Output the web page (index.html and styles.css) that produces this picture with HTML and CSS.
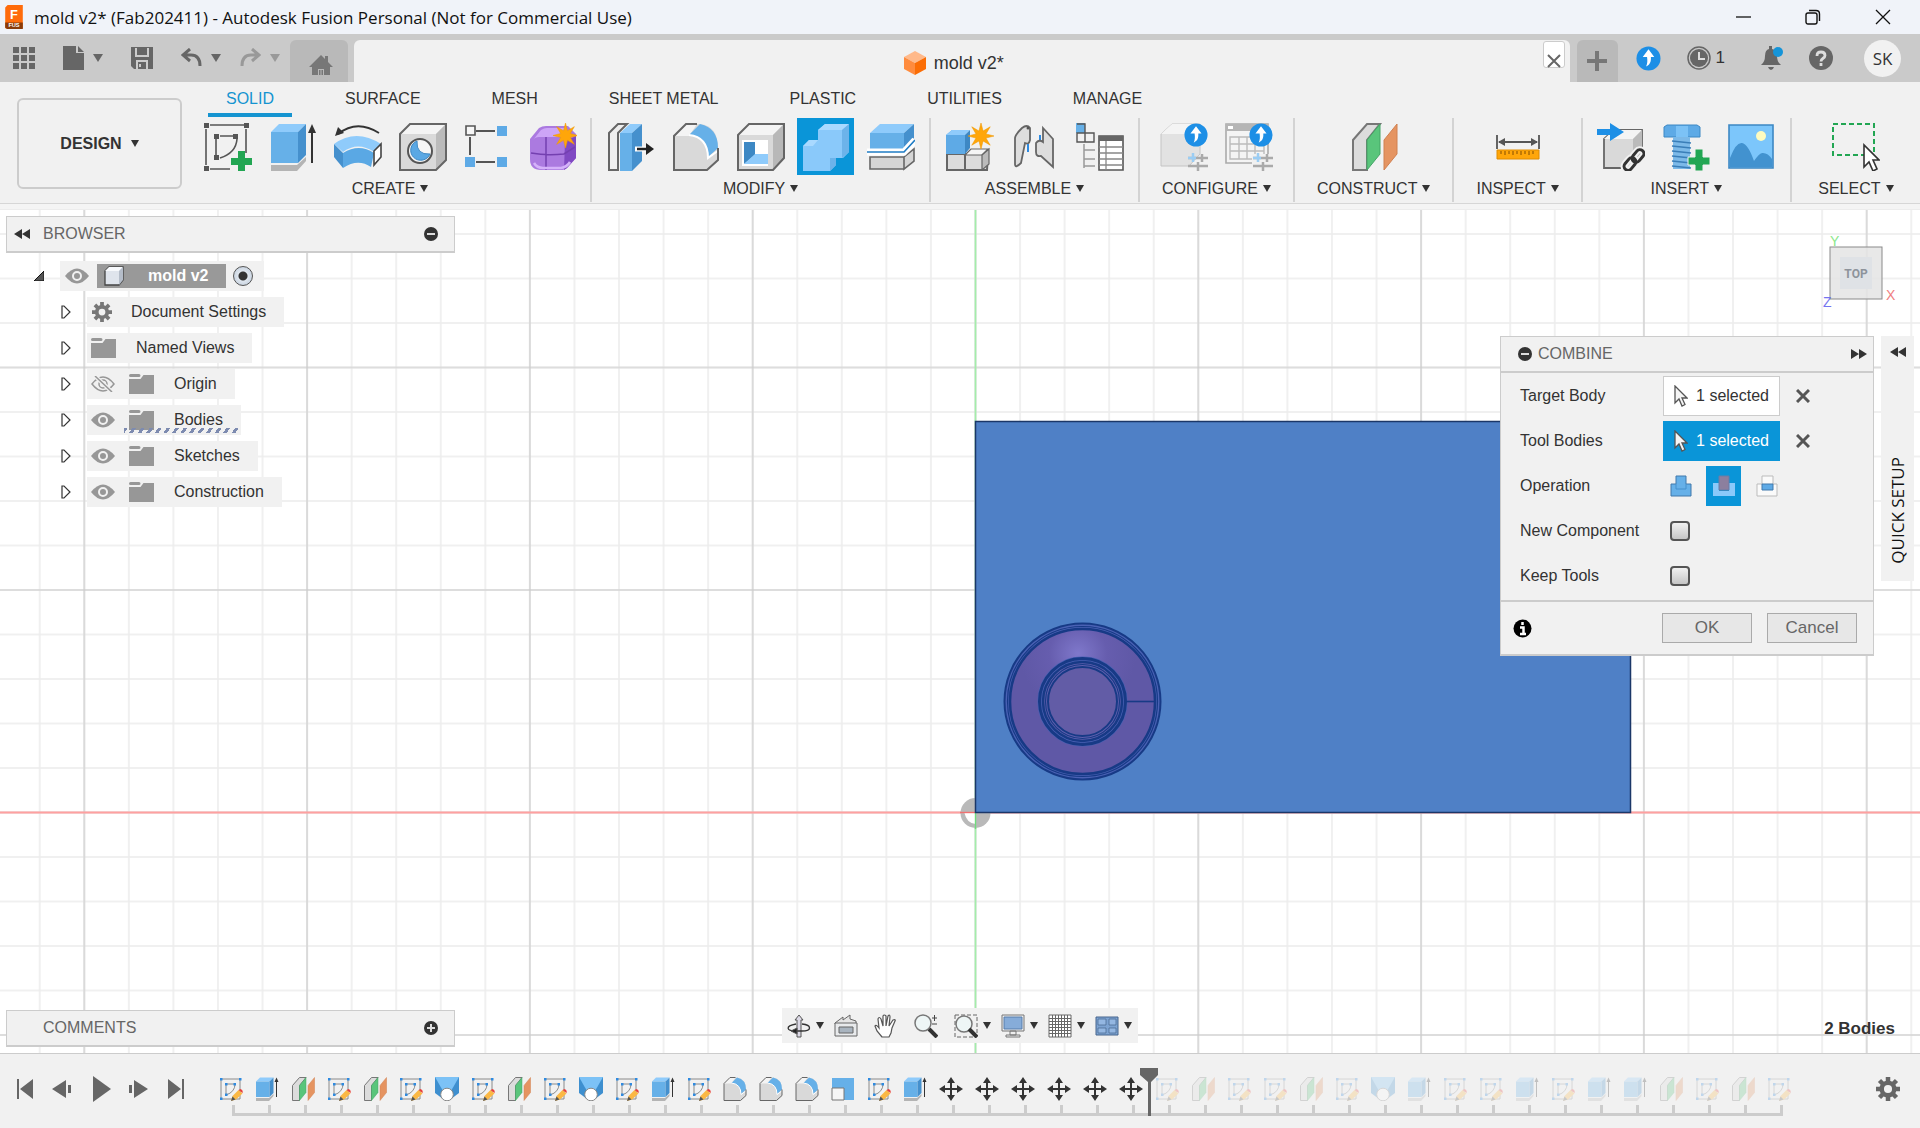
FILE: index.html
```html
<!DOCTYPE html>
<html lang="en">
<head>
    <meta charset="UTF-8">
    <meta name="viewport" content="width=device-width, initial-scale=1.0">
    <title>mold v2* (Fab202411) - Autodesk Fusion Personal (Not for Commercial Use)</title>
    <link rel="stylesheet" href="styles.css">
</head>
<body>
    <!-- Shared icons -->
    <svg class="sprite" aria-hidden="true">
        <symbol id="upload" viewBox="0 0 26 26">
            <circle cx="13" cy="13" r="12.5" fill="#1d8fe6"/>
            <path d="M13 3.500l6 8h-3.500c.3 5-1 8-5 9.800 1.500-3 1.500-6 1-9.800H7z" fill="#fff"/>
        </symbol>
        <symbol id="star" viewBox="0 0 24 24">
            <path d="M12 0l1.900 7.400 6.600-3.900-3.900 6.600L24 12l-7.400 1.900 3.900 6.600-6.600-3.900L12 24l-1.900-7.400-6.600 3.900 3.900-6.600L0 12l7.400-1.900-3.900-6.600 6.600 3.900z" fill="#ffa60a" stroke="#f09800" stroke-width=".5"/>
        </symbol>
        <symbol id="eye" viewBox="0 0 24 16">
            <path d="M0 8Q12-7 24 8 12 23 0 8z" fill="#979797"/>
            <circle cx="12" cy="8" r="4" fill="none" stroke="#f1f1f1" stroke-width="2"/>
        </symbol>
        <symbol id="eye-off" viewBox="0 0 24 16">
            <path d="M1 8Q12-6 23 8 12 22 1 8z" fill="none" stroke="#979797" stroke-width="1.500"/>
            <circle cx="12" cy="8" r="4" fill="none" stroke="#979797" stroke-width="1.500"/>
            <path d="M4 0l17 16" stroke="#f1f1f1" stroke-width="4"/>
            <path d="M4 0l17 16" stroke="#979797" stroke-width="1.500"/>
        </symbol>
        <symbol id="folder" viewBox="0 0 25 20">
            <path d="M0 1.500Q0 0 1.500 0H10q1.500 0 1.500 1.500T10 3H1.500Q0 3 0 1.500zM0 5h11.500l3-4H25v19H0z" fill="#979797"/>
        </symbol>
        <symbol id="gear" viewBox="0 0 24 24">
            <circle cx="12" cy="12" r="6.300" fill="none" stroke="currentColor" stroke-width="4.500"/>
            <path d="M12 0v5M12 19v5M0 12h5M19 12h5M3.500 3.500L7 7M17 17l3.500 3.500M20.500 3.500L17 7M7 17l-3.500 3.500" stroke="currentColor" stroke-width="4.500"/>
        </symbol>
        <symbol id="closed" viewBox="0 0 10 14">
            <path d="M1 1h2l6 6-6 6H1z" fill="#fff" stroke="#333" stroke-width="1.200"/>
        </symbol>
        <symbol id="collapse" viewBox="0 0 16 10">
            <path d="M8 0v10L0 5zM16 0v10L8 5z" fill="#333"/>
        </symbol>
        <symbol id="expand" viewBox="0 0 16 10">
            <path d="M0 0v10l8-5zM8 0v10l8-5z" fill="#333"/>
        </symbol>
        <symbol id="minus" viewBox="0 0 14 14">
            <circle cx="7" cy="7" r="7" fill="#333"/><path d="M3 7h8" stroke="#ddd" stroke-width="2"/>
        </symbol>
        <symbol id="plus" viewBox="0 0 14 14">
            <circle cx="7" cy="7" r="7" fill="#333"/><path d="M3 7h8M7 3v8" stroke="#ddd" stroke-width="2"/>
        </symbol>
        <symbol id="pointer" viewBox="0 0 14 22">
            <path d="M1 1v17l4-4 3 7 3-1.500-3-6.500h5z" fill="#f5f5f5" stroke="#555" stroke-width="1.300"/>
        </symbol>
        <symbol id="cross" viewBox="0 0 14 14">
            <path d="M1 1l12 12M13 1L1 13" stroke="#555" stroke-width="3"/>
        </symbol>

        <symbol id="sketch" viewBox="0 0 24 24">
            <path d="M2 2h19v20H2z" fill="none" stroke="#8a8a8a"/>
            <path d="M7 7h9q0 8-9 11z" fill="none" stroke="#8a8a8a"/>
            <path d="M1 1h2.500v2.500H1zM20 1h2.500v2.500H20zM1 20.500h2.500V23H1zM6 6h2.500v2.500H6zM14.500 6H17v2.500h-2.500zM6 16.500h2.500V19H6z" fill="#2e8ae0"/>
            <path d="M12 24l1.500-5 6-6 4 3.500-6.500 6z" fill="#fbb845"/><path d="M12 24l1.500-4.500 3 3z" fill="#555"/>
            <path d="M19.500 13l2-1q3 1 2 4z" fill="#e8413c"/>
        </symbol>
        <symbol id="extrude" viewBox="0 0 48 48">
            <path d="M2 42h26l9-8v4l-9 10H2z" fill="#b4b4b4"/>
            <path d="M2 9l8-8h27l-8 8z" fill="#8fcbfb"/><path d="M2 9h27v31H2z" fill="#66b0e8"/><path d="M29 9l8-8v31l-8 8z" fill="#4590cd"/>
            <path d="M43 40V7" stroke="#333" stroke-width="2"/><path d="M43 1l4 9h-8z" fill="#333"/>
        </symbol>
        <symbol id="plane" viewBox="0 0 48 48">
            <path d="M3 17L17 1h13L17 17v30H3z" fill="#dcdcdc" stroke="#777" stroke-width="2"/>
            <path d="M17 17L30 1v30L17 47z" fill="#59c57b" stroke="#44a566" stroke-width="1"/>
            <path d="M34 17L47 1v30L34 47z" fill="#e59461" stroke="#d08050" stroke-width="1"/>
        </symbol>
        <symbol id="loft" viewBox="0 0 24 24">
            <path d="M0 0h24v16l-8 6H8l-8-6z" fill="#3e8fcf"/><path d="M0 0h24l-8 14H8z" fill="#7cc2f6"/>
            <circle cx="12" cy="17.500" r="6.300" fill="#fff" stroke="#888"/>
        </symbol>
        <symbol id="fillet" viewBox="0 0 48 48">
            <path d="M2 13L14 1h14q18 2 18 24v12L35 47H2z" fill="#d9d9d9"/>
            <path d="M2 13L14 1h11L17 13z" fill="#f4f4f4"/>
            <path d="M17 12L28 1q18 4 18 24L36 34q0-20-19-22z" fill="#66b0e8"/>
            <path d="M17 12q19 2 19 23l11-8" fill="none" stroke="#fff" stroke-width="2"/>
            <path d="M25 1H14L2 13v34h33l11-10V25" fill="none" stroke="#666" stroke-width="2"/>
        </symbol>
        <symbol id="scale" viewBox="0 0 24 24">
            <path d="M1 1h22v22H1z" fill="#66b0e8"/><path d="M1 11h12v12H1z" fill="#f6f6f6" stroke="#777"/>
        </symbol>
        <symbol id="move" viewBox="0 0 24 24">
            <path d="M12 3v18M3 12h18" stroke="#333" stroke-width="2"/>
            <path d="M12 0l4 6H8zM12 24l4-6H8zM0 12l6-4v8zM24 12l-6-4v8z" fill="#333"/>
        </symbol>
    </svg>

    <div class="app">
        <header class="titlebar">
            <svg class="logo" viewBox="0 0 22 30"><path d="M3 0h19v29H0V3z" fill="#ff6b0b"/><path d="M0 22h22v8H2l-2-2z" fill="#8a3b0a"/><text x="11" y="17" class="logo-f">F</text><text x="11" y="28" class="logo-fus">FUS</text></svg>
            <h1>mold v2* (Fab202411) - Autodesk Fusion Personal (Not for Commercial Use)</h1>
            <div class="window-buttons">
                <button aria-label="Minimize"><svg width="16" height="16"><path d="M1 8h15" stroke="#111" stroke-width="1.300"/></svg></button>
                <button aria-label="Restore"><svg width="16" height="16" fill="none" stroke="#111" stroke-width="1.400"><rect x="1" y="4" width="11" height="11" rx="2"/><path d="M4 1.500h7q3.500 0 3.500 3.500v7"/></svg></button>
                <button aria-label="Close"><svg width="16" height="16"><path d="M1 1l14 14M15 1L1 15" stroke="#111" stroke-width="1.300"/></svg></button>
            </div>
        </header>

        <nav class="appbar">
            <div class="quick">
                <button aria-label="Show data panel"><svg width="22" height="22" fill="#666"><path d="M0 0h6v6H0zM8 0h6v6H8zM16 0h6v6h-6zM0 8h6v6H0zM8 8h6v6H8zM16 8h6v6h-6zM0 16h6v6H0zM8 16h6v6H8zM16 16h6v6h-6z"/></svg></button>
                <button class="with-caret" aria-label="File"><svg width="21" height="24" fill="#666"><path d="M0 0h13v7h8v17H0zM15 0l6 6h-6z"/></svg><span class="caret"></span></button>
                <button aria-label="Save"><svg width="22" height="22"><path d="M0 0h22v22H3l-3-3z" fill="#666"/><path d="M5 1v8h12V1M6 22v-8h10v8M9 17v3" fill="none" stroke="#ccc" stroke-width="2"/></svg></button>
                <button class="with-caret" aria-label="Undo"><svg width="21" height="20" fill="none" stroke="#666" stroke-width="3"><path d="M9 1L2 7l7 6M3 7h7q9 0 9 11"/></svg><span class="caret"></span></button>
                <button class="with-caret dim" aria-label="Redo"><svg width="21" height="20" fill="none" stroke="#999" stroke-width="3"><path d="M12 1l7 6-7 6M18 7h-7Q2 7 2 18"/></svg><span class="caret"></span></button>
            </div>
            <button class="home" aria-label="Home"><svg width="24" height="20" fill="#777"><path d="M12 0l4 4V1h3v6l5 5h-3v8h-6v-6H9v6H3v-8H0z"/><path d="M10 15h1.500v5H10zM12.500 15H14v5h-1.500z"/></svg></button>
            <div class="doc-tab">
                <svg width="22" height="24" viewBox="0 0 22 24"><path d="M11 0l11 6-11 6L0 6z" fill="#ffb98a"/><path d="M0 6l11 6v12L0 18z" fill="#ff8b3d"/><path d="M22 6l-11 6v12l11-6z" fill="#fb6d05"/></svg>
                <span>mold v2*</span>
                <button class="close-tab" aria-label="Close tab"><svg width="14" height="14"><path d="M1 1l12 12M13 1L1 13" stroke="#666" stroke-width="2"/></svg></button>
            </div>
            <button class="new-tab" aria-label="New tab"><svg width="20" height="20"><path d="M10 0v20M0 10h20" stroke="#777" stroke-width="4"/></svg></button>
            <div class="account">
                <button aria-label="Updates"><svg width="25" height="25"><use href="#upload"/></svg></button>
                <button class="jobs" aria-label="Job status"><svg width="24" height="24"><circle cx="12" cy="12" r="11" fill="none" stroke="#666" stroke-width="1.500"/><circle cx="12" cy="12" r="9" fill="#666"/><path d="M12 6v7h6" fill="none" stroke="#ddd" stroke-width="2"/></svg>1</button>
                <button aria-label="Notifications"><svg width="22" height="24"><path d="M0 19q4-3 4-9 0-6 4-7V0h3v3q5 1 5 7 0 6 4 9zM7 21h6q-1 3-3 3t-3-3z" fill="#666"/><circle cx="17" cy="6" r="5" fill="#1594d8"/></svg></button>
                <button aria-label="Help"><svg width="24" height="24"><circle cx="12" cy="12" r="12" fill="#666"/><path d="M8 10q0-4 4-4t4 3.500c0 3-4 2.500-4 6M12 17v3" fill="none" stroke="#ddd" stroke-width="2.800"/></svg></button>
                <button class="avatar">SK</button>
            </div>
        </nav>

        <section class="ribbon">
            <button class="workspace">DESIGN <span class="caret"></span></button>
            <div class="ribbon-main">
                <div class="tabs">
                    <button class="active">SOLID</button>
                    <button>SURFACE</button>
                    <button>MESH</button>
                    <button>SHEET METAL</button>
                    <button>PLASTIC</button>
                    <button>UTILITIES</button>
                    <button>MANAGE</button>
                </div>
                <div class="groups">
                    <div class="group">
                        <div class="tools">
                            <button aria-label="Create sketch"><svg viewBox="0 0 48 48"><path d="M6 2h34M2 6v36M42 6v24M6 46h20" stroke="#555" stroke-width="1.600"/><path d="M12 15v18M16 13h14M33 16q-1 14-17 19" fill="none" stroke="#555" stroke-width="1.600"/><path d="M0 0h5v5H0zM40 0h5v5h-5zM0 43h5v5H0zM10 11h5v5h-5zM29 11h5v5h-5zM10 32h5v5h-5z" fill="#555"/><path d="M34 28h7v7h7v7h-7v6h-7v-6h-7v-7h7z" fill="#22a653"/></svg></button>
                            <button aria-label="Extrude"><svg><use href="#extrude"/></svg></button>
                            <button aria-label="Revolve"><svg viewBox="0 0 48 48"><path d="M0 21q22-16 47 0l-7 8q-16-11-31 0z" fill="#8fcbfb"/><path d="M0 21l9 9v15L0 34z" fill="#4590cd"/><path d="M9 30q16-10 31 0l-3 14q-13-9-28 1z" fill="#5aa8e4"/><path d="M40 28l7-7v13l-7 8z" fill="#fff" stroke="#444" stroke-width="1.600"/><path d="M4 11q19-15 41-1" fill="none" stroke="#333" stroke-width="1.800"/><path d="M1 13l3-9 6 6z" fill="#333"/></svg></button>
                            <button aria-label="Hole"><svg viewBox="0 0 48 48"><path d="M1 11L11 1h36v36L37 47H1z" fill="#d9d9d9"/><path d="M1 11L11 1h36L37 11z" fill="#f4f4f4"/><path d="M37 11L47 1v36L37 47z" fill="#bbb"/><path d="M1 11L11 1h36v36L37 47H1z" fill="none" stroke="#666" stroke-width="2"/><circle cx="21" cy="28" r="12" fill="#f6f6f6" stroke="#555" stroke-width="2"/><path d="M18 18a10 10 0 1 0 13 13q-14 1-13-13z" fill="#5aa8e4" stroke="#3d88c4"/></svg></button>
                            <button aria-label="Pattern"><svg viewBox="0 0 48 48"><path d="M12 8h19M6 14v18M12 39h19" stroke="#555" stroke-width="2"/><path d="M2 3h9v9H2z" fill="#f6f6f6" stroke="#555" stroke-width="1.600"/><path d="M33 3h10v10H33zM1 34h10v10H1zM33 34h10v10H33z" fill="#5eaae6"/></svg></button>
                            <button aria-label="Create form"><svg viewBox="0 0 48 48"><path d="M1 16L10 5q3-2 7-2h22l8 8v24l-9 10q-2 2-5 2H12Q1 47 1 36z" fill="#ab7ae0"/><path d="M4 17l8-10q3-2 6-2h19l-8 9H10q-4 0-6 3z" fill="#cda5f7"/><path d="M36 18l11-5v22l-9 10-3 2z" fill="#8049c2"/><path d="M2 30q16 3 33 1l11-7M17 14v33" fill="none" stroke="#7440b0" stroke-width="1.500"/><path d="M5 40q3 5 9 5h18q6-1 9-6" fill="none" stroke="#d5b2fa" stroke-width="2.500"/><use href="#star" x="24" y="0" width="25" height="25"/></svg></button>
                        </div>
                        <button class="group-label">CREATE <span class="caret"></span></button>
                    </div>
                    <div class="group">
                        <div class="tools">
                            <button aria-label="Press pull"><svg viewBox="0 0 48 48"><path d="M2 10L11 1h9l-9 9v37H2z" fill="#eee" stroke="#666" stroke-width="2"/><path d="M13 10L23 1h12L25 10z" fill="#8fcbfb"/><path d="M13 10h12v38H13z" fill="#66b0e8"/><path d="M25 10l10-9v37l-10 10z" fill="#4590cd"/><path d="M28 26h12" stroke="#fff" stroke-width="5"/><path d="M30 26h10" stroke="#222" stroke-width="2.500"/><path d="M39 20l8 6-8 6z" fill="#222"/></svg></button>
                            <button aria-label="Fillet"><svg><use href="#fillet"/></svg></button>
                            <button aria-label="Shell"><svg viewBox="0 0 48 48"><path d="M1 12L12 1h35v34L36 47H1z" fill="#d9d9d9"/><path d="M1 12L12 1h35L36 12z" fill="#f4f4f4"/><path d="M36 12L47 1v34L36 47z" fill="#b8b8b8"/><path d="M1 12L12 1h35v34L36 47H1z" fill="none" stroke="#666" stroke-width="2"/><path d="M5 17h26v26H5z" fill="#fff"/><path d="M7 19h11v13L7 41z" fill="#3d88c4"/><path d="M18 31h13v10H7z" fill="#8fcbfb"/></svg></button>
                            <button class="on" aria-label="Combine"><svg viewBox="0 0 48 48"><path d="M1 23l6-6h9V7l7-6h24v28l-6 6h-7v7l-6 6H1z" fill="#8ac9fa"/><path d="M1 23l6-6h9l-5 6zM16 7l7-6h24l-7 6z" fill="#a9d9ff"/><path d="M40 7l7-6v28l-7 6zM28 35h6v7l-6 6z" fill="#6cb3ea"/></svg></button>
                            <button aria-label="Split body"><svg viewBox="0 0 48 48"><path d="M3 10l10-9h34L37 10z" fill="#8fcbfb"/><path d="M3 10h34v16H3z" fill="#66b0e8"/><path d="M37 10L47 1v14L37 26z" fill="#4590cd"/><path d="M3 34h34v12H3zM37 34l10-8v12l-10 8z" fill="#d5d5d5" stroke="#666" stroke-width="1.600"/><path d="M0 29h37L48 17" fill="none" stroke="#fff" stroke-width="7"/><path d="M0 29h37L48 17" fill="none" stroke="#1f7cc4" stroke-width="1.600"/></svg></button>
                        </div>
                        <button class="group-label">MODIFY <span class="caret"></span></button>
                    </div>
                    <div class="group">
                        <div class="tools">
                            <button aria-label="New component"><svg viewBox="0 0 48 48"><path d="M1 31h41l-1 16H1zM19 31v16" fill="#dcdcdc" stroke="#666" stroke-width="2"/><path d="M19 32l6-6h17l-6 6z" fill="#f6f6f6" stroke="#666" stroke-width="1.200"/><path d="M36 32l7-6v15l-7 6z" fill="#bbb" stroke="#666" stroke-width="1.200"/><path d="M0 12l6-5h17l-4 5v19H0z" fill="#5eaae6"/><path d="M0 12l6-5h18l-5 5z" fill="#8fcbfb"/><path d="M19 12l5-5v18l-5 6z" fill="#3d88c4"/><use href="#star" x="22" y="0" width="26" height="26"/></svg></button>
                            <button aria-label="Joint"><svg viewBox="0 0 48 48"><path d="M4 15q0-3 7-10 5-4 8 0v12q-1 5-5 3L10 40q-6 6-6 1z" fill="#ddd" stroke="#666" stroke-width="1.800"/><circle cx="17" cy="5" r="1.500" fill="#555"/><path d="M17 21v8M29 12v7" stroke="#2e8ae0" stroke-width="2"/><path d="M32 5l10 11v28L30 33q-5 1-5-4V20q3-4 7-1z" fill="#ddd" stroke="#666" stroke-width="1.800"/></svg></button>
                            <button aria-label="Parts list"><svg viewBox="0 0 48 48"><path d="M0 0h9v10H0z" fill="#66b0e8"/><path d="M1 10h8v9H1zM9 10h9v9H9zM1 1h8v9" fill="none" stroke="#555" stroke-width="1.400"/><path d="M8 21v24M8 27h11M8 36h11M8 43h11" stroke="#999" stroke-width="1.500"/><path d="M23 13h24v34H23z" fill="#fff" stroke="#555" stroke-width="1.600"/><path d="M23 13h24v5H23z" fill="#666"/><path d="M23 24h24M23 30h24M23 36h24M23 42h24M30 18v29" stroke="#888" stroke-width="1.300"/></svg></button>
                        </div>
                        <button class="group-label">ASSEMBLE <span class="caret"></span></button>
                    </div>
                    <div class="group">
                        <div class="tools">
                            <button aria-label="Configure design"><svg viewBox="0 0 48 48"><path d="M1 11L12 1h28v30l-11 12H1z" fill="#e2e2e2" stroke="#c4c4c4"/><path d="M1 11L12 1h28L29 11z" fill="#f4f4f4"/><path d="M28 35h20M28 43h20M42 31v8M38 39v9" stroke="#aaa" stroke-width="2.500"/><path d="M28 35h8M33 30v9" stroke="#9bcdf3" stroke-width="2.500"/><use href="#upload" x="24" y="0" width="24" height="24"/></svg></button>
                            <button aria-label="Configuration table"><svg viewBox="0 0 48 48"><path d="M1 1h42v39H1z" fill="#f4f4f4" stroke="#aaa" stroke-width="1.600"/><path d="M1 1h42v7H1z" fill="#b5b5b5"/><path d="M3 3h5v3H3z" fill="#fff"/><path d="M5 14h34v22H5zM5 21h34M5 28h34M14 14v22M22 14v22M30 14v22" fill="none" stroke="#bbb" stroke-width="1.400"/><path d="M27 31h21v17H27z" fill="#f1f1f1"/><path d="M28 35h20M28 43h20M42 31v8M38 39v9" stroke="#aaa" stroke-width="2.500"/><path d="M28 35h8M33 30v9" stroke="#9bcdf3" stroke-width="2.500"/><use href="#upload" x="24" y="0" width="24" height="24"/></svg></button>
                        </div>
                        <button class="group-label">CONFIGURE <span class="caret"></span></button>
                    </div>
                    <div class="group">
                        <div class="tools">
                            <button aria-label="Offset plane"><svg><use href="#plane"/></svg></button>
                        </div>
                        <button class="group-label">CONSTRUCT <span class="caret"></span></button>
                    </div>
                    <div class="group">
                        <div class="tools">
                            <button aria-label="Measure"><svg viewBox="0 0 48 48"><path d="M3 12v14M45 12v14M5 19h38" stroke="#555" stroke-width="1.800"/><path d="M4 19l7-4v8zM44 19l-7-4v8z" fill="#555"/><path d="M3 27h42v9H3z" fill="#ffa60a" stroke="#e08c00"/><path d="M7 28v3M11 28v4M15 28v3M19 28v4M23 28v3M27 28v4M31 28v3M35 28v4M39 28v3" stroke="#844f00"/></svg></button>
                        </div>
                        <button class="group-label">INSPECT <span class="caret"></span></button>
                    </div>
                    <div class="group">
                        <div class="tools">
                            <button aria-label="Insert derive"><svg viewBox="0 0 48 48"><path d="M7 16L17 7h28v28l-9 10H7z" fill="#d9d9d9" stroke="#666" stroke-width="1.800"/><path d="M7 16L17 7h28l-9 9z" fill="#f4f4f4"/><path d="M36 16l9-9v28l-9 10z" fill="#bbb"/><path d="M0 6h13V0l14 9-14 9v-6H0z" fill="#1d8fe6"/><g fill="none" stroke="#f1f1f1" stroke-width="7"><rect x="34" y="29" width="14" height="8" rx="4" transform="rotate(-50 41 33)"/><rect x="26" y="37" width="14" height="8" rx="4" transform="rotate(-50 33 41)"/></g><g fill="none" stroke="#333" stroke-width="3"><rect x="34" y="29" width="14" height="8" rx="4" transform="rotate(-50 41 33)"/><rect x="26" y="37" width="14" height="8" rx="4" transform="rotate(-50 33 41)"/></g></svg></button>
                            <button aria-label="Insert fastener"><svg viewBox="0 0 48 48"><path d="M2 4l3-2h30l3 2v10H2z" fill="#5eaae6" stroke="#3d88c4"/><path d="M14 3h12v11H14z" fill="#7cc2f6"/><path d="M11 14h17v32H11z" fill="#7cb9e8"/><path d="M10 18l19 2M10 23l19 2M10 28l19 2M10 33l19 2M10 38l19 2M10 43l19 2" stroke="#3a7eb8" stroke-width="1.500"/><path d="M33 26h8v8h7v8h-7v6h-8v-6h-7v-8h7z" fill="#22a653" stroke="#f1f1f1"/></svg></button>
                            <button aria-label="Insert decal"><svg viewBox="0 0 48 48"><path d="M2 2h44v43H2z" fill="#7cc6fb" stroke="#3d88c4" stroke-width="1.600"/><path d="M3 35Q9 19 15 20t12 18q6-9 9-8 5 0 9 6v8H3z" fill="#4292cf"/><circle cx="34" cy="13" r="5" fill="#fdfbc0"/></svg></button>
                        </div>
                        <button class="group-label">INSERT <span class="caret"></span></button>
                    </div>
                    <div class="group">
                        <div class="tools">
                            <button aria-label="Select"><svg viewBox="0 0 48 48"><path d="M1 1h41v31H1z" fill="none" stroke="#22a653" stroke-width="2" stroke-dasharray="5 3"/><path d="M32 22v22l5-5 4 9 4-2-4-9h6z" fill="#fff" stroke="#333" stroke-width="1.600"/></svg></button>
                        </div>
                        <button class="group-label">SELECT <span class="caret"></span></button>
                    </div>
                </div>
            </div>
        </section>

        <main class="canvas">
            <!-- Sketch grid, axes and the two bodies -->
            <svg class="scene" viewBox="0 0 1920 843" preserveAspectRatio="xMidYMid slice">
                <defs>
                    <pattern id="minor" x="974.500" y="601.500" width="44.560" height="44.500" patternUnits="userSpaceOnUse"><path d="M1 0v44.500M0 1h44.560" stroke="#ececec" stroke-width="1.500"/></pattern>
                    <pattern id="major" x="974.500" y="601.500" width="222.800" height="222.500" patternUnits="userSpaceOnUse"><path d="M1 0v222.500M0 1h222.800" stroke="#c9c9c9" stroke-width="1.100"/></pattern>
                    <radialGradient id="bowl" cx="47%" cy="17%" r="40%"><stop offset="0" stop-color="#7f78cb"/><stop offset=".5" stop-color="#665dae"/><stop offset="1" stop-color="#5f58a6"/></radialGradient>
                </defs>
                <rect width="1920" height="843" fill="#fff"/>
                <rect width="1920" height="843" fill="url(#minor)"/>
                <rect width="1920" height="843" fill="url(#major)"/>
                <path d="M0 602.500h1920" stroke="#ffa0a0" stroke-width="2"/>
                <path d="M975.500 0v843" stroke="#a3eeaa" stroke-width="1.600"/>
                <circle cx="975.500" cy="603" r="15" fill="#b9b9b9"/>
                <path d="M975.500 603v11q-9-1-11-11z" fill="#fff"/>
                <path d="M960 602.500h16" stroke="#f07070" stroke-width="1.400"/>
                <path d="M975.500 603v16" stroke="#6fdc7c" stroke-width="1.400"/>
                <rect x="975.500" y="211.500" width="655" height="391" fill="#4f80c6" stroke="#1b3768" stroke-width="1.500"/>
                <g fill="none" stroke="#173a86">
                    <circle cx="1082.500" cy="491.500" r="78" fill="#4a61b4" stroke-width="2"/>
                    <circle cx="1082.500" cy="491.500" r="75" stroke-width="1.200"/>
                    <circle cx="1082.500" cy="491.500" r="72.500" fill="url(#bowl)" stroke-width="2.500"/>
                    <circle cx="1082.500" cy="491.500" r="41" stroke="#4a61b4" stroke-width="8"/>
                    <circle cx="1082.500" cy="491.500" r="43" stroke-width="3"/>
                    <circle cx="1082.500" cy="491.500" r="39.500" fill="#5f5fae" stroke-width="2.500"/>
                    <circle cx="1082.500" cy="491.500" r="37" stroke-width="1.200"/>
                    <circle cx="1082.500" cy="491.500" r="34.500" fill="#625ca6" stroke-width="2"/>
                    <path d="M1127 491.500h28" stroke-width="1.600"/>
                </g>
            </svg>

            <aside class="browser">
                <div class="panel-title">
                    <svg width="16" height="10"><use href="#collapse"/></svg>
                    <h2>BROWSER</h2>
                    <button aria-label="Minimize browser"><svg width="14" height="14"><use href="#minus"/></svg></button>
                </div>
                <ul class="tree">
                    <li class="root">
                        <svg class="arrow" width="10" height="10"><path d="M10 0v10H0z" fill="#555" stroke="#111"/></svg>
                        <div class="node">
                            <svg width="24" height="16"><use href="#eye"/></svg>
                            <span class="root-name">
                                <svg width="20" height="20"><path d="M1 5l4-4h14v13l-4 5H1z" fill="#dfe4ec" stroke="#444" stroke-width="1.300"/><path d="M1 5l4-4h14l-4 4z" fill="#f7f9fc"/><path d="M15 5l4-4v13l-4 5z" fill="#b5bdc9"/></svg>
                                mold v2
                            </span>
                            <input type="radio" name="active" aria-label="Activate mold v2" checked>
                        </div>
                    </li>
                    <li><svg class="arrow" width="10" height="14"><use href="#closed"/></svg><div class="node"><svg class="tree-gear" width="20" height="20"><use href="#gear"/></svg>Document Settings</div></li>
                    <li><svg class="arrow" width="10" height="14"><use href="#closed"/></svg><div class="node views"><svg width="25" height="20"><use href="#folder"/></svg>Named Views</div></li>
                    <li><svg class="arrow" width="10" height="14"><use href="#closed"/></svg><div class="node"><svg width="24" height="16"><use href="#eye-off"/></svg><svg class="folder" width="25" height="20"><use href="#folder"/></svg>Origin</div></li>
                    <li><svg class="arrow" width="10" height="14"><use href="#closed"/></svg><div class="node marked"><svg width="24" height="16"><use href="#eye"/></svg><svg class="folder" width="25" height="20"><use href="#folder"/></svg>Bodies</div></li>
                    <li><svg class="arrow" width="10" height="14"><use href="#closed"/></svg><div class="node"><svg width="24" height="16"><use href="#eye"/></svg><svg class="folder" width="25" height="20"><use href="#folder"/></svg>Sketches</div></li>
                    <li><svg class="arrow" width="10" height="14"><use href="#closed"/></svg><div class="node"><svg width="24" height="16"><use href="#eye"/></svg><svg class="folder" width="25" height="20"><use href="#folder"/></svg>Construction</div></li>
                </ul>
            </aside>

            <svg class="viewcube" width="84" height="84" viewBox="0 0 84 84">
                <text x="14" y="15" fill="#8be88b">Y</text>
                <rect x="14" y="16" width="52" height="52" fill="#e4e4e4" fill-opacity=".85" stroke="#8a8a8a"/>
                <rect x="24" y="26" width="32" height="32" fill="#dfe2e6"/>
                <text x="40" y="47" class="cube-face">TOP</text>
                <text x="70" y="69" fill="#f08080">X</text>
                <text x="7" y="76" fill="#7474f0">Z</text>
            </svg>

            <form class="combine">
                <div class="dialog-title">
                    <svg width="14" height="14"><use href="#minus"/></svg>
                    <h2>COMBINE</h2>
                    <svg width="16" height="10"><use href="#expand"/></svg>
                </div>
                <div class="fields">
                    <div class="field"><span>Target Body</span><button type="button" class="pick"><svg width="14" height="22"><use href="#pointer"/></svg>1 selected</button><button type="button" class="clear" aria-label="Clear target body"><svg width="14" height="14"><use href="#cross"/></svg></button></div>
                    <div class="field"><span>Tool Bodies</span><button type="button" class="pick focus"><svg width="14" height="22"><use href="#pointer"/></svg>1 selected</button><button type="button" class="clear" aria-label="Clear tool bodies"><svg width="14" height="14"><use href="#cross"/></svg></button></div>
                    <div class="field"><span>Operation</span>
                        <div class="operations">
                            <button type="button" aria-label="Join"><svg width="22" height="22"><path d="M1 9h5V1h10v8h5v12H1z" fill="#66b0e8" stroke="#4079ab"/><path d="M6 9v5h10V9" fill="none" stroke="#4590cd"/></svg></button>
                            <button type="button" class="on" aria-label="Cut"><svg width="22" height="22"><path d="M0 8h6v8h10V8h6v13H0z" fill="#8ac9fa"/><path d="M6 1h10v14H6z" fill="#8c7f9e" stroke="#697da6"/></svg></button>
                            <button type="button" aria-label="Intersect"><svg width="22" height="22"><path d="M6 1h11v8h4v12H1V9h5z" fill="#fafafa" stroke="#bbb"/><path d="M6 9h11v6H6z" fill="#5eaae6" stroke="#4079ab"/></svg></button>
                        </div>
                    </div>
                    <div class="field"><label for="newComponent">New Component</label><input type="checkbox" id="newComponent"></div>
                    <div class="field"><label for="keepTools">Keep Tools</label><input type="checkbox" id="keepTools"></div>
                </div>
                <div class="dialog-buttons">
                    <svg width="19" height="19"><circle cx="9.500" cy="9.500" r="9" fill="#000"/><path d="M9.500 3v3M7 8.500h3.500V15M7 15h6" fill="none" stroke="#fff" stroke-width="2.500"/></svg>
                    <button type="button">OK</button>
                    <button type="button">Cancel</button>
                </div>
            </form>

            <aside class="quick-setup">
                <svg width="16" height="10"><use href="#collapse"/></svg>
                <span>QUICK SETUP</span>
            </aside>

            <div class="comments panel-title">
                <h2>COMMENTS</h2>
                <button aria-label="Expand comments"><svg width="14" height="14"><use href="#plus"/></svg></button>
            </div>

            <div class="navbar">
                <button aria-label="Orbit"><svg width="24" height="24" fill="none" stroke="#555"><path d="M12 1l4 5h-2v17h-4V6H8z" fill="#dcd9e6"/><path d="M9 10C-2 12-1 17 9 17h6c10 0 10-6 0-7" stroke="#333" stroke-width="1.300"/><path d="M4 17l6-3v6z" fill="#222"/></svg><span class="caret"></span></button>
                <button class="plain" aria-label="Look at"><svg width="24" height="24" stroke="#666"><path d="M1 9l8-6v3l7-5v4l6 2v3H1z" fill="#e5e5e5"/><path d="M1 9h22v13H1z" fill="#e8eaec"/><path d="M5 13h14v6H5z" fill="#a9b4bf"/></svg></button>
                <button class="plain" aria-label="Pan"><svg width="24" height="24"><path d="M8 23L3 17 1 12q1-2 4 2L4 5q1-3 3 0l2 7V2q1-2 3 0v10l2-10q2-2 2 1l-1 9 4-6q3-1 2 1l-3 7-1 5-2 4z" fill="#fff" stroke="#555" stroke-width="1.200"/></svg></button>
                <button class="plain" aria-label="Zoom"><svg width="24" height="24"><circle cx="9" cy="9" r="8" fill="#eef6f6" stroke="#777" stroke-width="1.500"/><path d="M15 15l8 8" stroke="#333" stroke-width="4"/><path d="M18 4h5M20.500 1v6M18 10h5" stroke="#444"/></svg></button>
                <button aria-label="Fit"><svg width="24" height="24"><path d="M1 1h22v22H1z" fill="none" stroke="#666" stroke-dasharray="4 2"/><circle cx="10" cy="10" r="8" fill="#eef6f6" stroke="#777" stroke-width="1.500"/><path d="M15 15l8 8" stroke="#333" stroke-width="4"/></svg><span class="caret"></span></button>
                <button aria-label="Display settings"><svg width="24" height="24" stroke="#777"><path d="M1 1h22v16H1zM9 17h6v4H9zM5 21h14v2H5z" fill="#eee"/><path d="M3 3h18v12H3z" fill="#86acd9" stroke="#567dab"/></svg><span class="caret"></span></button>
                <button aria-label="Grid and snaps"><svg width="24" height="24"><path d="M1 1h22v22H1zM4.500 1v22M7.500 1v22M10.500 1v22M13.500 1v22M16.500 1v22M19.500 1v22M1 4.500h22M1 7.500h22M1 10.500h22M1 13.500h22M1 16.500h22M1 19.500h22" fill="#fff" stroke="#666"/></svg><span class="caret"></span></button>
                <button aria-label="Viewports"><svg width="24" height="24"><path d="M1 3h22v18H1z" fill="#7da3d2" stroke="#46648c"/><path d="M3 5h8v6H3zM14 5h7v6h-7zM3 14h8v5H3zM14 14h7v5h-7z" fill="#94b7e2" stroke="#46648c" stroke-width=".7"/></svg><span class="caret"></span></button>
            </div>

            <div class="selection-count">2 Bodies</div>
        </main>

        <footer class="timeline">
            <div class="playback">
                <button aria-label="Go to start"><svg width="24" height="26"><path d="M4 3h2v20H4zM20 3v20L7 13z"/></svg></button>
                <button aria-label="Step back"><svg width="24" height="26"><path d="M15 4v18L1 13zM17 9h3v8h-3z"/></svg></button>
                <button aria-label="Play"><svg width="24" height="26"><path d="M4 0v26l18-13z"/></svg></button>
                <button aria-label="Step forward"><svg width="24" height="26"><path d="M7 4v18l14-9zM2 9h3v8H2z"/></svg></button>
                <button aria-label="Go to end"><svg width="24" height="26"><path d="M3 3v20l13-10zM17 3h2v20h-2z"/></svg></button>
            </div>
            <ol class="features">
                <li><svg><use href="#sketch"/></svg></li>
                <li><svg><use href="#extrude"/></svg></li>
                <li><svg><use href="#plane"/></svg></li>
                <li><svg><use href="#sketch"/></svg></li>
                <li><svg><use href="#plane"/></svg></li>
                <li><svg><use href="#sketch"/></svg></li>
                <li><svg><use href="#loft"/></svg></li>
                <li><svg><use href="#sketch"/></svg></li>
                <li><svg><use href="#plane"/></svg></li>
                <li><svg><use href="#sketch"/></svg></li>
                <li><svg><use href="#loft"/></svg></li>
                <li><svg><use href="#sketch"/></svg></li>
                <li><svg><use href="#extrude"/></svg></li>
                <li><svg><use href="#sketch"/></svg></li>
                <li><svg><use href="#fillet"/></svg></li>
                <li><svg><use href="#fillet"/></svg></li>
                <li><svg><use href="#fillet"/></svg></li>
                <li><svg><use href="#scale"/></svg></li>
                <li><svg><use href="#sketch"/></svg></li>
                <li><svg><use href="#extrude"/></svg></li>
                <li><svg><use href="#move"/></svg></li>
                <li><svg><use href="#move"/></svg></li>
                <li><svg><use href="#move"/></svg></li>
                <li><svg><use href="#move"/></svg></li>
                <li><svg><use href="#move"/></svg></li>
                <li class="current"><svg><use href="#move"/></svg><svg class="marker" viewBox="0 0 18 48"><path d="M0 0h18v7l-7 7v34H8V14L0 7z" fill="#666"/></svg></li>
                <li class="rolled"><svg><use href="#sketch"/></svg></li>
                <li class="rolled"><svg><use href="#plane"/></svg></li>
                <li class="rolled"><svg><use href="#sketch"/></svg></li>
                <li class="rolled"><svg><use href="#sketch"/></svg></li>
                <li class="rolled"><svg><use href="#plane"/></svg></li>
                <li class="rolled"><svg><use href="#sketch"/></svg></li>
                <li class="rolled"><svg><use href="#loft"/></svg></li>
                <li class="rolled"><svg><use href="#extrude"/></svg></li>
                <li class="rolled"><svg><use href="#sketch"/></svg></li>
                <li class="rolled"><svg><use href="#sketch"/></svg></li>
                <li class="rolled"><svg><use href="#extrude"/></svg></li>
                <li class="rolled"><svg><use href="#sketch"/></svg></li>
                <li class="rolled"><svg><use href="#extrude"/></svg></li>
                <li class="rolled"><svg><use href="#extrude"/></svg></li>
                <li class="rolled"><svg><use href="#plane"/></svg></li>
                <li class="rolled"><svg><use href="#sketch"/></svg></li>
                <li class="rolled"><svg><use href="#plane"/></svg></li>
                <li class="rolled"><svg><use href="#sketch"/></svg></li>
            </ol>
            <button class="settings" aria-label="Timeline settings"><svg width="24" height="24"><use href="#gear"/></svg></button>
        </footer>
    </div>
</body>
</html>
```
FILE: styles.css
```css
* {
    box-sizing: border-box;
}

body {
    margin: 0;
    font-family: "Liberation Sans", Arial, sans-serif;
    font-size: 16px;
    color: #333;
    background: #f1f1f1;
}

h1, h2, ul, ol {
    margin: 0;
    padding: 0;
    font-size: 16px;
    font-weight: normal;
    list-style: none;
}

button {
    display: flex;
    align-items: center;
    justify-content: center;
    padding: 0;
    border: 0;
    background: none;
    color: inherit;
    font: inherit;
}

svg {
    display: block;
    flex: none;
}

.sprite {
    position: absolute;
    width: 0;
    height: 0;
}

/* Small triangle used by every drop-down button */
.caret {
    border: 4px solid transparent;
    border-top: 7px solid #333;
    border-bottom: 0;
}

.app {
    display: flex;
    flex-direction: column;
    min-height: 100vh;
}

/* Window title */
.titlebar {
    display: flex;
    align-items: center;
    height: 34px;
    padding: 0 29px 0 4px;
    background: #f0f3f9;
}

.logo {
    width: 20px;
    height: 24px;
}

.logo text {
    fill: #fff;
    font-weight: bold;
    text-anchor: middle;
}

.logo-f {
    font-size: 16px;
}

.logo-fus {
    font-size: 7px;
}

.titlebar h1 {
    margin-left: 10px;
    font-family: "Open Sans", "Noto Sans", sans-serif;
    font-size: 17px;
    color: #111;
}

.window-buttons {
    display: flex;
    gap: 54px;
    margin-left: auto;
}

/* Document tabs and account buttons */
.appbar {
    display: flex;
    align-items: flex-end;
    height: 48px;
    background: #cacaca;
}

.quick {
    display: flex;
    align-items: center;
    gap: 28px;
    width: 290px;
    height: 48px;
    padding-left: 13px;
}

.with-caret {
    gap: 9px;
}

.appbar .caret {
    border: 5px solid transparent;
    border-top: 8px solid #666;
    border-bottom: 0;
}

.appbar .dim .caret {
    border-top-color: #999;
}

.quick .dim {
    margin-left: -9px;
}

.home {
    width: 58px;
    height: 42px;
    padding: 8px 0 0 4px;
    border-radius: 6px 6px 0 0;
    background: #b9b9b9;
}

.doc-tab {
    display: flex;
    flex: 1;
    align-items: center;
    justify-content: center;
    gap: 8px;
    position: relative;
    height: 42px;
    margin: 0 7px 0 6px;
    padding: 4px 16px 0 0;
    border-radius: 6px 6px 0 0;
    background: #f1f1f1;
    font-size: 18px;
}

.close-tab {
    position: absolute;
    top: 1px;
    right: 5px;
    width: 22px;
    height: 27px;
    padding-top: 12px;
    border: 1px solid #ccc;
    border-radius: 3px;
    background: #fff;
}

.new-tab {
    width: 41px;
    height: 42px;
    border-radius: 6px 6px 0 0;
    background: #b9b9b9;
}

.account {
    display: flex;
    align-items: center;
    gap: 26px;
    height: 48px;
    padding: 0 19px 0 18px;
}

.jobs {
    gap: 5px;
    margin-right: 10px;
    font-size: 17px;
}

.avatar {
    width: 37px;
    height: 37px;
    margin-left: 5px;
    border-radius: 50%;
    background: #f1f1f1;
    font-family: "Open Sans", "Noto Sans", sans-serif;
    font-size: 17px;
}

/* Ribbon */
.ribbon {
    display: flex;
    padding-bottom: 5px;
    border-bottom: 1px solid #ececec;
    background: linear-gradient(to top, #f4f4f4 5px, #d6d6d6 5px, #d6d6d6 6px, #f1f1f1 6px);
}

.workspace {
    gap: 9px;
    width: 165px;
    height: 91px;
    margin: 16px 13px 0 17px;
    border: 2px solid #ccc;
    border-radius: 6px;
    font-weight: bold;
}

.ribbon-main {
    flex: 1;
}

.tabs {
    display: flex;
    gap: 35px;
    padding-left: 13px;
}

.tabs button {
    height: 35px;
    padding: 2px 18px 0;
    border-bottom: 4px solid transparent;
}

.tabs .active {
    border-bottom-color: #1594d0;
    color: #1594d0;
}

.groups {
    display: flex;
    padding: 1px 0 2px;
}

.group {
    display: flex;
    flex-direction: column;
    align-items: center;
    padding: 0 6px;
    border-left: 2px solid #d3d3d3;
}

.group:first-child {
    padding: 0 5px 0 0;
    border-left: 0;
}

.group:last-child {
    flex: 1;
}

.tools {
    display: flex;
}

.tools button {
    width: 65px;
    height: 57px;
}

.tools svg {
    width: 48px;
    height: 48px;
}

.tools .on {
    width: 57px;
    margin: 0 4px;
    background: #0a95d8;
}

.group-label {
    gap: 5px;
    height: 27px;
    padding: 0 16px;
}

/* Modelling canvas */
.canvas {
    flex: 1;
    position: relative;
    overflow: hidden;
}

.scene {
    position: absolute;
    width: 100%;
    height: 100%;
}

.browser {
    position: absolute;
    top: 6px;
    left: 6px;
    width: 449px;
}

.panel-title {
    display: flex;
    align-items: center;
    height: 37px;
    padding: 0 16px 0 7px;
    border: 1px solid #ccc;
    border-bottom-width: 2px;
    background: #f1f1f1;
    color: #666;
}

.panel-title h2 {
    margin-left: 13px;
}

.panel-title button {
    margin-left: auto;
}

.tree {
    padding-top: 5px;
}

.tree li {
    display: flex;
    align-items: center;
    gap: 16px;
    height: 36px;
    padding-left: 55px;
}

.tree .root {
    padding-left: 28px;
}

.node {
    display: flex;
    align-items: center;
    height: 30px;
    padding: 0 18px 0 4px;
    background: #f1f1f1;
}

.folder {
    margin: 0 20px 0 14px;
}

.tree-gear {
    margin: 0 19px 0 1px;
    color: #777;
}

.views svg {
    margin-right: 20px;
}

.root .node {
    padding: 0 11px 0 5px;
}

.root-name {
    display: flex;
    align-items: center;
    gap: 24px;
    height: 24px;
    margin: 0 7px 0 8px;
    padding: 0 18px 0 7px;
    background: #999;
    color: #fff;
    font-weight: bold;
}

.root input {
    appearance: none;
    width: 20px;
    height: 20px;
    margin: 0;
    border: 1px solid #555;
    border-radius: 50%;
    background: radial-gradient(#333 4px, #dfe6ee 5px, #b9c6d6);
}

/* Dashes under the node that holds the selection */
.marked {
    position: relative;
}

.marked::after {
    content: "";
    position: absolute;
    right: 3px;
    bottom: 2px;
    left: 37px;
    height: 5px;
    background: repeating-linear-gradient(125deg, #7d8bb0 0 3px, transparent 3px 7px);
}

.viewcube {
    position: absolute;
    top: 21px;
    right: 20px;
    font-size: 14px;
}

.cube-face {
    fill: #8d939b;
    font-family: Roboto, sans-serif;
    font-size: 12px;
    font-weight: bold;
    text-anchor: middle;
}

/* Combine dialog */
.combine {
    position: absolute;
    top: 126px;
    right: 46px;
    width: 374px;
    border: 1px solid #ccc;
    border-bottom-width: 2px;
    background: #f1f1f1;
}

.dialog-title {
    display: flex;
    align-items: center;
    gap: 6px;
    height: 36px;
    padding: 0 6px 0 17px;
    border-bottom: 2px solid #ccc;
    color: #666;
}

.dialog-title h2 {
    flex: 1;
}

.fields {
    padding: 0 0 2px 19px;
    border-bottom: 2px solid #ccc;
}

.field {
    display: flex;
    align-items: center;
    height: 45px;
}

.field > :first-child {
    width: 143px;
}

.pick {
    gap: 8px;
    width: 117px;
    height: 40px;
    border: 1px solid #ccc;
    background: #fff;
}

.pick.focus {
    border-color: #0a95d8;
    background: #0a95d8;
    color: #fff;
}

.clear {
    width: 46px;
    height: 40px;
}

.operations {
    display: flex;
    gap: 8px;
}

.operations button {
    width: 35px;
    height: 40px;
}

.operations .on {
    background: #0a95d8;
}

.field input {
    appearance: none;
    width: 20px;
    height: 20px;
    margin: 0 0 0 7px;
    border: 2px solid #555;
    border-radius: 4px;
    background: linear-gradient(#f1f1f1, #c6c6c6);
}

.dialog-buttons {
    display: flex;
    align-items: center;
    gap: 15px;
    height: 52px;
    padding: 0 16px 0 12px;
}

.dialog-buttons svg {
    margin-right: auto;
}

.dialog-buttons button {
    width: 90px;
    height: 30px;
    border: 1px solid #aaa;
    background: #e7e7e7;
    color: #666;
    font-size: 17px;
}

.quick-setup {
    display: flex;
    flex-direction: column;
    align-items: center;
    justify-content: space-between;
    position: absolute;
    top: 126px;
    right: 6px;
    width: 33px;
    height: 245px;
    padding: 11px 0 17px;
    background: #f1f1f1;
}

.quick-setup span {
    writing-mode: vertical-rl;
    transform: rotate(180deg);
    font-family: "Open Sans", "Noto Sans", sans-serif;
    font-size: 17px;
    color: #111;
}

.comments {
    position: absolute;
    bottom: 6px;
    left: 6px;
    width: 449px;
}

.comments h2 {
    margin-left: 29px;
}

.navbar {
    display: flex;
    align-items: center;
    gap: 10px;
    position: absolute;
    bottom: 10px;
    left: 50%;
    height: 35px;
    padding: 0 6px 0 5px;
    background: #f1f1f1;
    transform: translateX(-50%);
}

.navbar button {
    gap: 5px;
}

.navbar .plain {
    padding-right: 6px;
}

.selection-count {
    position: absolute;
    right: 25px;
    bottom: 14px;
    font-size: 17px;
    font-weight: bold;
}

/* Timeline */
.timeline {
    display: flex;
    align-items: flex-start;
    height: 75px;
    padding: 8px 20px 0 13px;
    border-top: 1px solid #ccc;
    background: #f1f1f1;
}

.playback {
    display: flex;
    gap: 14px;
    padding-top: 14px;
    fill: #666;
}

.features {
    display: flex;
    margin: 15px auto 0 24px;
}

.features li {
    width: 36px;
    height: 39px;
    padding: 0 6px;
    background:
        linear-gradient(#ccc, #ccc) 19px 28px / 3px 11px no-repeat,
        linear-gradient(#ccc, #ccc) 0 36px / 100% 3px no-repeat;
}

.features li:first-child {
    background-position: 19px 28px, 19px 36px;
}

.features li:last-child {
    background-position: 19px 28px, 0 36px;
    background-size: 3px 11px, 22px 3px;
}

.features svg {
    width: 24px;
    height: 24px;
}

.rolled svg {
    opacity: .25;
}

.current {
    position: relative;
}

.features .marker {
    position: absolute;
    top: -9px;
    right: -9px;
    width: 18px;
    height: 48px;
}

.settings {
    padding-top: 15px;
    color: #666;
}
```
